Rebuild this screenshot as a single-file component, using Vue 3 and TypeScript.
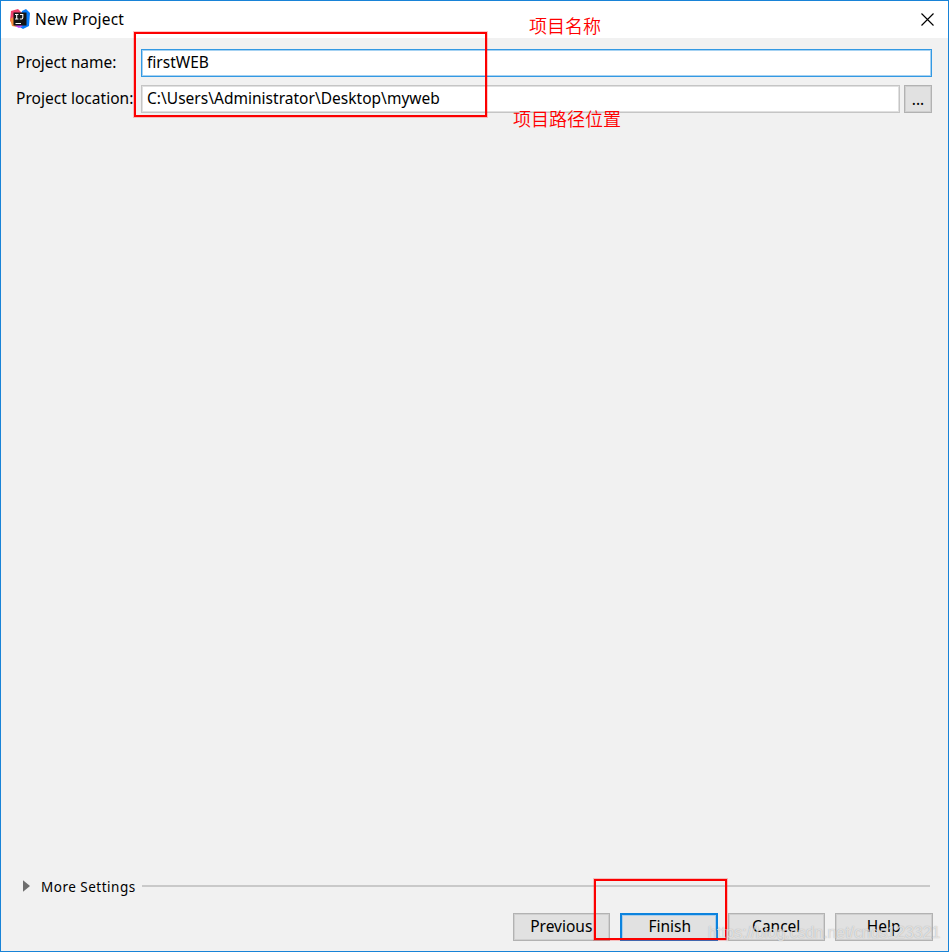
<script setup lang="ts">
import { ref } from 'vue'

const projectName = ref('firstWEB')
const projectLocation = ref('C:\\Users\\Administrator\\Desktop\\myweb')
</script>

<template>
  <main class="window">
    <header class="titlebar">
      <svg class="logo" viewBox="0 0 20 20">
        <path d="M1 2 8 0 12 4 5 16 0 12Z" fill="#f0416b" />
        <path d="M0 10 3 8 7 18 2 17Z" fill="#f98b3b" />
        <path d="M12 2 16 0 20 4 19 17 13 20 8 17Z" fill="#087cfa" />
        <path d="M5 17 9 19 13 17 8 14Z" fill="#c04af0" />
        <path d="M3.5 3.5H16.5V16.5H3.5Z" fill="#151515" />
        <path d="M5 5.5H8.4M6.7 5.5V10M5 10H8.4M10 5.5H12.8V8.6Q12.8 10 11.5 10H9.8" fill="none" stroke="#fff" stroke-width="1.1" />
        <path d="M5.5 14.5H11" stroke="#fff" stroke-width="1" />
      </svg>
      <h1 class="title">New Project</h1>
      <svg class="close" viewBox="0 0 13 13"><path d="M.5.5 12.5 12.5M12.5.5.5 12.5" stroke="#000" stroke-width="1.15" /></svg>
    </header>
    <section class="form">
      <div class="row">
        <label>Project name:</label>
        <div class="field focused">{{ projectName }}</div>
      </div>
      <div class="row">
        <label class="wide">Project location:</label>
        <div class="field path">{{ projectLocation }}</div>
        <button class="browse">...</button>
      </div>
    </section>
    <section class="more">
      <svg class="arrow" viewBox="0 0 7 12"><path d="M0 .3 7 6 0 11.7Z" fill="#6e6e6e" /></svg>
      <span class="more-label">More Settings</span>
      <div class="rule"></div>
    </section>
    <footer class="actions">
      <button>Previous</button>
      <button class="primary">Finish</button>
      <button>Cancel</button>
      <button>Help</button>
    </footer>
    <div class="mark mark-fields"></div>
    <div class="mark mark-finish"></div>
    <span class="note note-name">项目名称</span>
    <span class="note note-path">项目路径位置</span>
    <span class="watermark">https://blog.csdn.net/cnds123321</span>
  </main>
</template>

<style>
body { margin: 0; }
</style>

<style scoped>
* { box-sizing: border-box; }
.window {
  position: relative;
  display: flex;
  flex-direction: column;
  width: 949px;
  height: 952px;
  overflow: hidden;
  border: 1px solid #1883d7;
  background: #f1f1f1;
  color: #000;
  font: 15.5px/24px "Noto Sans", "Open Sans", "Noto Sans CJK SC", sans-serif;
  white-space: nowrap;
}
.titlebar {
  display: flex;
  align-items: center;
  height: 37px;
  padding: 0 14px 1px 9px;
  background: #fff;
}
.logo { width: 20px; height: 20px; margin-right: 5px; }
.title { margin: 0; font: inherit; flex: 1; letter-spacing: .18px; }
.close { width: 13px; height: 13px; }
.form { display: flex; flex-direction: column; gap: 8px; padding: 11px 16px 0 15px; }
.row { display: flex; height: 28px; }
label { width: 125px; line-height: 27px; }
.wide { letter-spacing: .03px; }
.field {
  flex: 1;
  height: 28px;
  padding-left: 5px;
  border: 1px solid #c5c5c5;
  background: #fff;
  line-height: 25px;
  box-shadow: inset 0 0 0 1px #e0e0e0;
}
.path { letter-spacing: .02px; }
.focused { border-color: #3399e3; box-shadow: inset 0 0 0 1px #a6d2f2; }
button {
  width: 97.5px;
  height: 28px;
  padding: 0 0 2px;
  border: 1px solid #b2b2b2;
  box-shadow: inset 0 0 0 1px #cfcfcf;
  background: #e1e1e1;
  color: #000;
  font: inherit;
  line-height: 24px;
  text-align: center;
}
.browse { width: 28px; margin-left: 5px; padding: 0; }
.row .field.path { margin-right: -0.5px; }
.more { display: flex; align-items: center; height: 24px; margin-top: auto; padding: 0 18px 0 22px; font-size: 13.5px; }
.arrow { width: 7px; height: 12px; margin-right: 11px; margin-top: -2px; }
.more-label { letter-spacing: .5px; }
.rule { flex: 1; height: 2px; margin: -2px 0 0 6px; background: #c9c9c9; }
.actions { display: flex; justify-content: flex-end; gap: 10px; padding: 14px 15.5px 10px; }
.primary { border: 2px solid #0c83de; box-shadow: inset 0 0 0 1px #a9cdea; line-height: 22px; padding-left: 2px; }
.mark { position: absolute; border: 2px solid #fc0000; box-shadow: 0 0 0 1px rgba(255, 0, 0, .22); pointer-events: none; }
.mark-fields { left: 133px; top: 31px; width: 353px; height: 85px; }
.mark-finish { left: 593px; top: 878px; width: 133px; height: 61px; }
.note { position: absolute; color: #f00; font: 350 18px/26px "Noto Sans CJK SC", sans-serif; }
.note-name { left: 528px; top: 11px; }
.note-path { left: 512px; top: 104px; }
.watermark {
  position: absolute;
  left: 707px;
  top: 922px;
  font: 16px/20px "Liberation Sans", sans-serif;
  letter-spacing: -.08px;
  color: rgba(255, 255, 255, .65);
  text-shadow: 0 0 1px rgba(100, 100, 100, .55);
}
</style>
